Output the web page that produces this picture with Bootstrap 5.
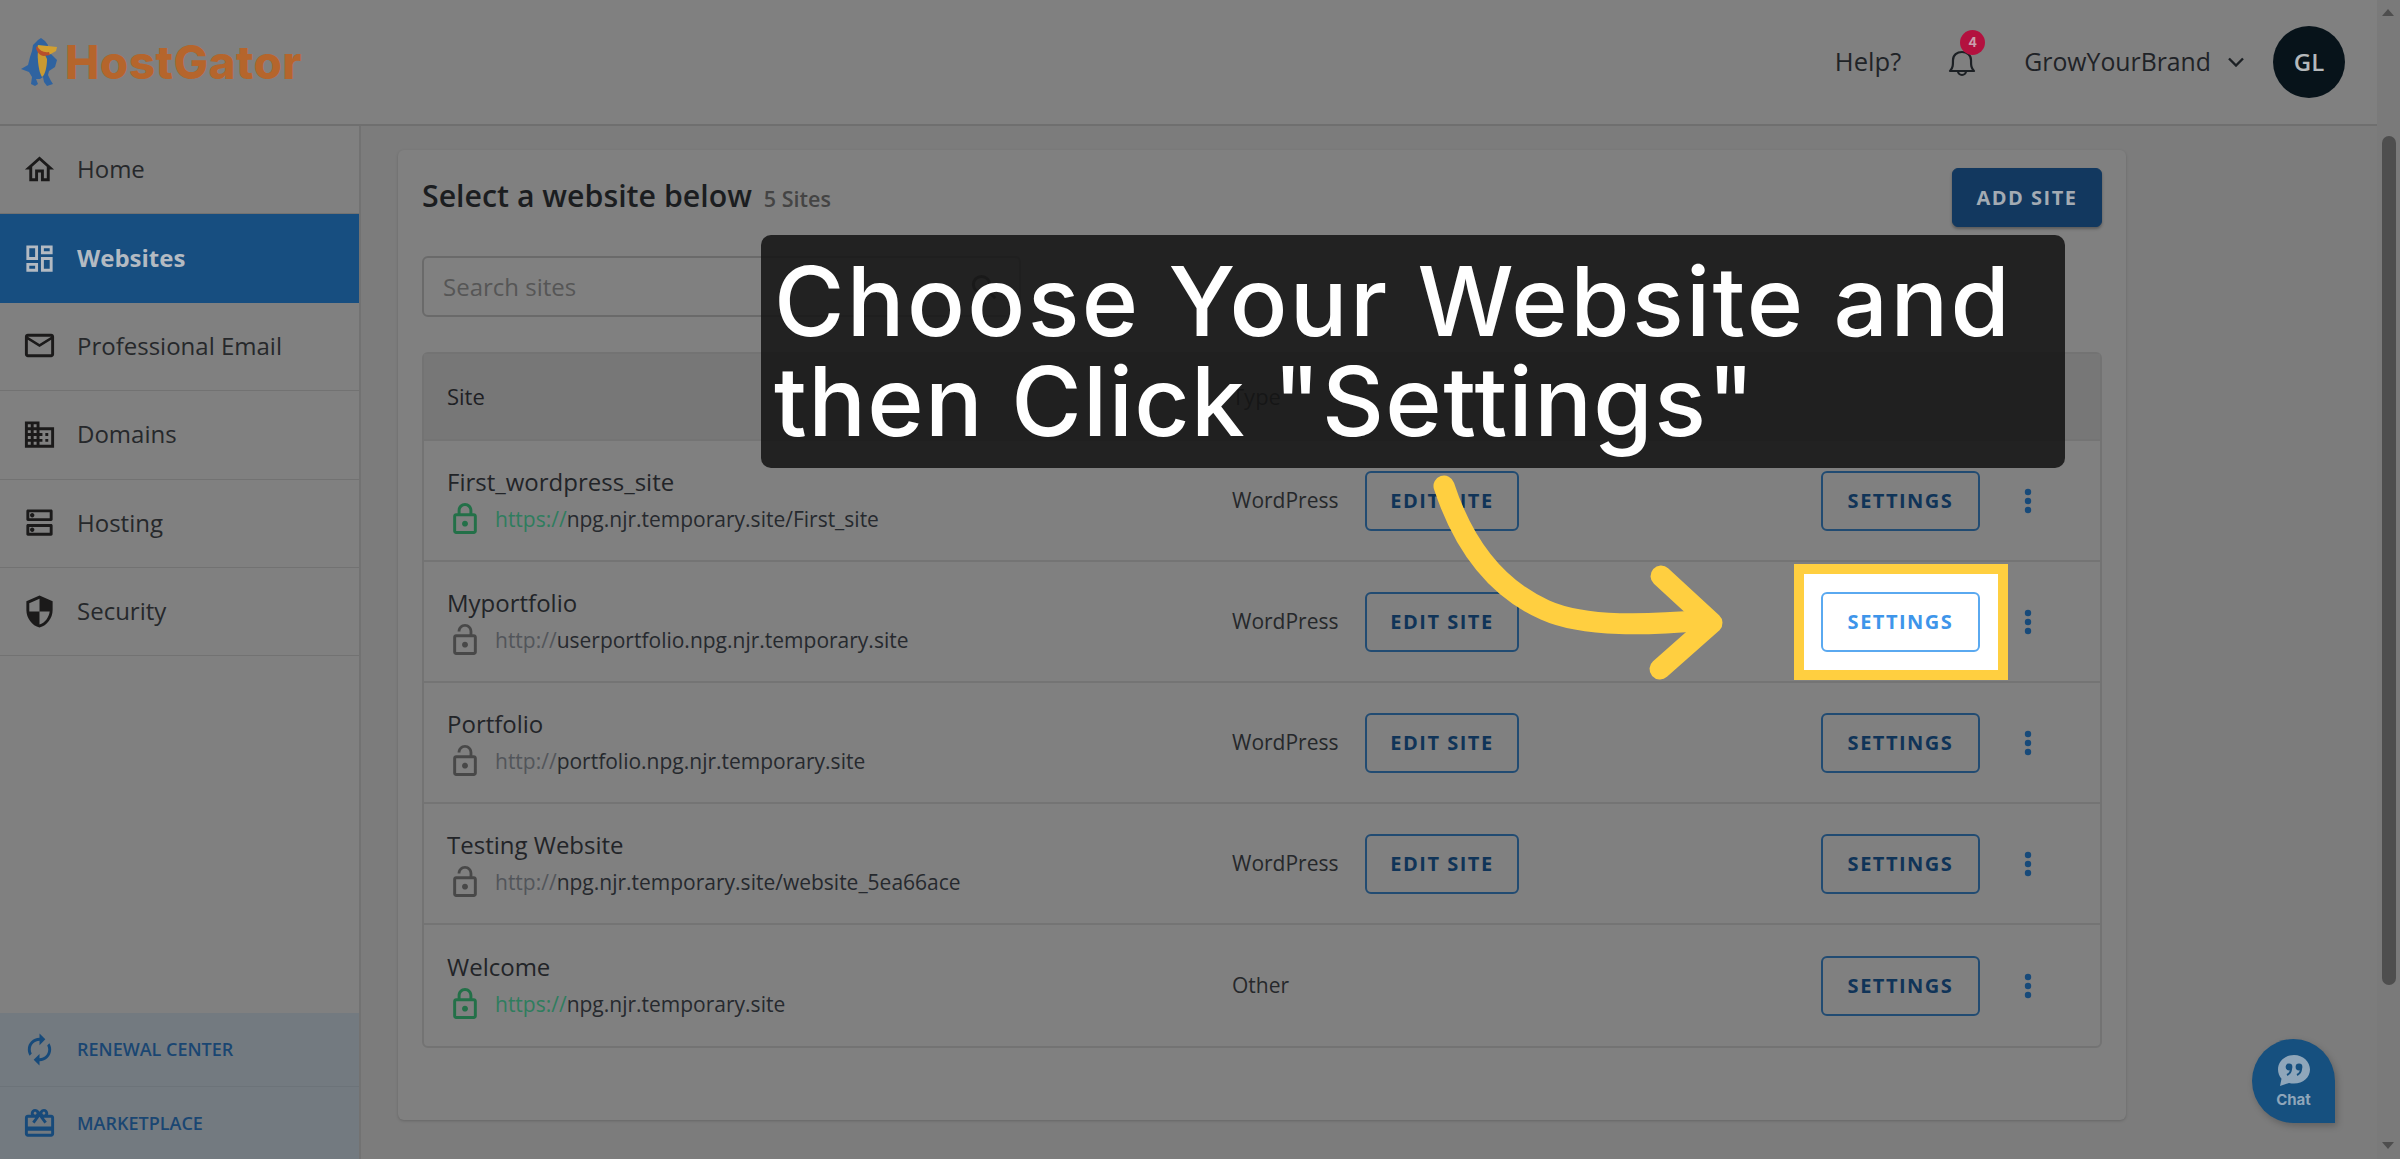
<!DOCTYPE html>
<html lang="en">
<head>
  <meta charset="UTF-8">
  <title>HostGator - Websites</title>
  <meta name="viewport" content="width=device-width, initial-scale=1">
  <link href="https://cdn.jsdelivr.net/npm/bootstrap@5.3.2/dist/css/bootstrap.min.css" rel="stylesheet">
  <style>
    html, body { height: 100%; }
    body { position: relative; overflow: hidden; background: #7c7c7c; font-family: "Open Sans", sans-serif; color: #262626; }

    .shell { width: 2377px; height: 1159px; }
    .top-bar { height: 126px; background: #808080; border-bottom: 2px solid #6f6f6f; padding-right: 32px; }
    .brand { margin-left: 21px; }
    .brand-word { font-family: Inter, sans-serif; font-weight: 800; font-size: 46px; letter-spacing: .4px; color: #b5652c; line-height: 1; margin-left: 8px; }
    .top-link { font-size: 25.6px; color: #1f2327; }
    .top-user { font-size: 24.8px; font-weight: 500; color: #1f2327; }
    .bell-wrap { position: relative; width: 32px; height: 32px; margin-left: 45px; margin-right: 46px; }
    .bell-count { position: absolute; top: -16px; left: 14px; width: 25px; height: 25px; border-radius: 50%; background: #b3113f; color: #c9a0ae; font: 700 13px/25px Inter, sans-serif; text-align: center; }
    .user-arrow { margin-left: 17px; margin-right: 29px; }
    .avatar { width: 72px; height: 72px; border-radius: 50%; background: #07131a; color: #b4b8bb; font-size: 24px; font-weight: 600; }

    .side { width: 361px; background: #808080; border-right: 2px solid #727272; }
    .side .list-group-item { height: 88.4px; background: transparent; color: #26282b; font-size: 24px; padding: 0 0 1px 22px; border-color: #727272; gap: 20px; }
    .side .list-group-item:last-child { border-bottom-width: 1px; }
    .side .list-group-item svg { width: 35px; height: 35px; fill: #1b1a1a; flex: none; }
    .side .list-group-item.active { background: #174e80; border-color: #174e80; color: #b3bac2; font-weight: 700; margin-top: 0; }
    .side .list-group-item.active svg { fill: #b3bac2; }
    .side-foot { background: #737a80; }
    .side-foot a { height: 73px; display: flex; align-items: center; gap: 20px; padding-left: 22px; font-size: 18px; font-weight: 600; color: #1a4672; text-decoration: none; }
    .side-foot a + a { border-top: 1px solid #6c7379; }
    .side-foot svg { width: 35px; height: 35px; fill: #174a7a; flex: none; }

    .main-area { padding: 24px 0 0 37px; }
    .panel { width: 1728px; height: 970px; background: #808080; border: 0; border-radius: 6px; box-shadow: 0 1px 3px rgba(0,0,0,.18); padding: 18px 24px 0 24px; }
    .panel-title { font-size: 30.3px; font-weight: 600; color: #1b1d20; line-height: 1; margin-top: 2px; }
    .panel-count { font-size: 21.5px; font-weight: 600; color: #444; margin-left: 12px; }
    .btn-add { width: 150px; height: 59px; background: #12385f; border-color: #12385f; color: #a3abb3; font-size: 20px; font-weight: 700; letter-spacing: 1.5px; padding: 0; box-shadow: 0 2px 3px rgba(0,0,0,.3); }

    .search-box { position: relative; width: 599px; margin-top: 29px; margin-bottom: 35px; }
    .search-box .form-control { height: 61px; background: #808080; border: 2px solid #6a6a6a; border-radius: 6px; font-size: 24px; padding-left: 19px; color: #555; }
    .search-box .form-control::placeholder { color: #565656; }
    .search-ic { position: absolute; right: 22px; top: 16px; width: 30px; height: 30px; }

    .site-table { width: 1680px; table-layout: fixed; margin: 0; border: 2px solid #737373; border-collapse: separate; border-spacing: 0; border-radius: 6px; --bs-table-bg: transparent; --bs-table-color: #262626; }
    .site-table th, .site-table td { padding: 0; border-bottom: 2px solid #747474; vertical-align: middle; }
    .site-table tr:last-child td { border-bottom: 0; }
    .site-table thead th { height: 87px; background: #777777; font-size: 22px; font-weight: 500; color: #1e2024; }
    .site-table td { height: 121.1px; font-size: 21px; color: #26282b; }
    .site-table .first-col { padding-left: 23px; }
    .site-name { font-size: 24px; line-height: 30px; color: #222428; }
    .site-url { font-size: 21px; line-height: 30px; gap: 18px; margin-top: 6px; margin-left: 6px; color: #26292e; }
    .site-url svg { width: 24px; height: 31px; flex: none; }
    .lock-on { fill: #237048; }
    .lock-off { fill: #484848; }
    .proto-on { color: #2f7d5e; }
    .proto-off { color: #52555a; }

    .btn-row { height: 60px; padding: 0; background: transparent; border: 2px solid #214b72; border-radius: 6px; color: #103458; font-size: 20px; font-weight: 700; letter-spacing: 1.5px; }
    .btn-edit { width: 154px; }
    .btn-set { width: 159px; }
    .kebab { width: 8px; height: 26px; display: block; margin-left: 9px; fill: #174a7a; }

    .hl-wrap { position: relative; display: inline-block; }
    .hl-wrap::before { content: ""; position: absolute; inset: -28px -28px -28px -27px; background: #fff; border: 10px solid #ffcf40; }
    .hl-wrap .btn-row { position: relative; background: #fff; border-color: #5aa9f0; color: #3e95ea; }

    .callout { position: absolute; left: 761px; top: 235px; width: 1304px; height: 233px; background: rgba(20,20,20,.88); border-radius: 10px; padding: 16px 0 0 13px; color: #fff; font-family: Inter, sans-serif; font-size: 96px; font-weight: 500; letter-spacing: 2.4px; line-height: 100px; white-space: nowrap; z-index: 30; }
    .callout-second { letter-spacing: 1.4px; }
    .arrow-mark { position: absolute; left: 1420px; top: 460px; width: 320px; height: 240px; z-index: 31; }

    .chat-bubble { position: absolute; left: 2252px; top: 1039px; width: 83px; height: 84px; background: #16507f; border-radius: 50% 50% 0 50%; box-shadow: 2px 3px 7px rgba(0,0,0,.22); color: #8fa6ba; font: 700 15px/1 Inter, sans-serif; padding-top: 15px; z-index: 5; }
    .chat-bubble svg { width: 34px; height: 33px; display: block; margin-bottom: 5px; }

    .scroll-rail { width: 23px; height: 1159px; background: #7a7a7a; position: relative; }
    .scroll-thumb { position: absolute; left: 5px; top: 136px; width: 14px; height: 849px; background: #4e4e4e; border-radius: 7px; }
    .scroll-up, .scroll-down { position: absolute; left: 5px; width: 0; height: 0; border-left: 6.5px solid transparent; border-right: 6.5px solid transparent; }
    .scroll-up { top: 9px; border-bottom: 7px solid #4e4e4e; }
    .scroll-down { top: 1142px; border-top: 7px solid #4e4e4e; }
  </style>
</head>
<body>

<svg width="0" height="0" class="position-absolute">
  <symbol id="lock-closed" viewBox="4 1 16 21"><path d="M18 8h-1V6c0-2.76-2.24-5-5-5S7 3.24 7 6v2H6c-1.1 0-2 .9-2 2v10c0 1.1.9 2 2 2h12c1.1 0 2-.9 2-2V10c0-1.1-.9-2-2-2zM9 6c0-1.66 1.34-3 3-3s3 1.34 3 3v2H9V6zm9 14H6V10h12v10zm-6-3c1.1 0 2-.9 2-2s-.9-2-2-2-2 .9-2 2 .9 2 2 2z"/></symbol>
  <symbol id="lock-open" viewBox="4 1 16 21"><path d="M12 17c1.1 0 2-.9 2-2s-.9-2-2-2-2 .9-2 2 .9 2 2 2zm6-9h-1V6c0-2.76-2.24-5-5-5S7 3.24 7 6h1.9c0-1.71 1.39-3.1 3.1-3.1 1.71 0 3.1 1.39 3.1 3.1v2H6c-1.1 0-2 .9-2 2v10c0 1.1.9 2 2 2h12c1.1 0 2-.9 2-2V10c0-1.1-.9-2-2-2zm0 12H6V10h12v10z"/></symbol>
  <symbol id="dots" viewBox="0 0 8 26"><circle cx="4" cy="4" r="3.2"/><circle cx="4" cy="13" r="3.2"/><circle cx="4" cy="22" r="3.2"/></symbol>
</svg>

<div class="d-flex">
  <div class="shell d-flex flex-column">

    <!-- Top bar -->
    <header class="top-bar d-flex align-items-center flex-shrink-0">
      <div class="brand d-flex align-items-center">
        <svg width="36" height="50" viewBox="0 0 36 50">
          <path d="M17 3L20 1L24 4L27 8L26 12L29 16L32 19L36 23L34 30L28 34L27 38L30 44L32 47L26 49L23 45L22 40L19 42L15 42L17 47L14 49L10 47L11 40L8 35L0 32L7 28L9 20L11 14L12 8Z" fill="#2f63a0"/>
          <path d="M17 14C16 22 18 36 21 40C24 38 26 30 26 22L24 18Z" fill="#c99a33"/>
          <path d="M17 8L36 10L35 14L28 18L22 18L16 12Z" fill="#d2a030"/>
          <path d="M16 9C19 14 23 16 28 15L29 18L23 19C19 19 16 15 15 11Z" fill="#b8502c"/>
        </svg>
        <span class="brand-word">HostGator</span>
      </div>
      <div class="d-flex align-items-center ms-auto">
        <span class="top-link">Help?</span>
        <div class="bell-wrap">
          <svg width="32" height="32" viewBox="0 0 32 32" fill="none" stroke="#1c2024" stroke-width="2.2" stroke-linejoin="round">
            <path d="M4 25c3-3 3-6 3-11 0-5 4-8 9-8s9 3 9 8c0 5 0 8 3 11z"/>
            <path d="M12 25a4 4 0 0 0 8 0"/>
          </svg>
          <span class="bell-count">4</span>
        </div>
        <span class="top-user">GrowYourBrand</span>
        <svg class="user-arrow" width="16" height="10" viewBox="0 0 16 10" fill="none" stroke="#1c2024" stroke-width="2.4"><path d="M1 1.500l7 7 7-7"/></svg>
        <span class="avatar d-flex align-items-center justify-content-center">GL</span>
      </div>
    </header>

    <div class="d-flex flex-grow-1">
      <!-- Sidebar -->
      <aside class="side d-flex flex-column flex-shrink-0">
        <div class="list-group list-group-flush">
          <a class="list-group-item d-flex align-items-center" href="#"><svg viewBox="0 0 24 24"><path d="M12 5.69l5 4.5V18h-2v-6H9v6H7v-7.81l5-4.5M12 3L2 12h3v8h6v-6h2v6h6v-8h3L12 3z"/></svg>Home</a>
          <a class="list-group-item d-flex align-items-center active" href="#"><svg viewBox="0 0 24 24"><path d="M19 5v2h-4V5h4M9 5v6H5V5h4m10 8v6h-4v-6h4M9 17v2H5v-2h4M21 3h-8v6h8V3zM11 3H3v10h8V3zm10 8h-8v10h8V11zm-10 4H3v6h8v-6z"/></svg>Websites</a>
          <a class="list-group-item d-flex align-items-center" href="#"><svg viewBox="0 0 24 24"><path d="M22 6c0-1.1-.9-2-2-2H4c-1.1 0-2 .9-2 2v12c0 1.1.9 2 2 2h16c1.1 0 2-.9 2-2V6zm-2 0l-8 5-8-5h16zm0 12H4V8l8 5 8-5v10z"/></svg>Professional Email</a>
          <a class="list-group-item d-flex align-items-center" href="#"><svg viewBox="0 0 24 24"><path d="M12 7V3H2v18h20V7H12zM6 19H4v-2h2v2zm0-4H4v-2h2v2zm0-4H4V9h2v2zm0-4H4V5h2v2zm4 12H8v-2h2v2zm0-4H8v-2h2v2zm0-4H8V9h2v2zm0-4H8V5h2v2zm10 12h-8v-2h2v-2h-2v-2h2v-2h-2V9h8v10zm-2-8h-2v2h2v-2zm0 4h-2v2h2v-2z"/></svg>Domains</a>
          <a class="list-group-item d-flex align-items-center" href="#"><svg viewBox="0 0 24 24"><path d="M19 15v4H5v-4h14m1-2H4c-.55 0-1 .45-1 1v6c0 .55.45 1 1 1h16c.55 0 1-.45 1-1v-6c0-.55-.45-1-1-1zM7 18.500c-.82 0-1.500-.67-1.500-1.500s.68-1.500 1.500-1.500 1.500.67 1.500 1.500-.67 1.500-1.500 1.500zM19 5v4H5V5h14m1-2H4c-.55 0-1 .45-1 1v6c0 .55.45 1 1 1h16c.55 0 1-.45 1-1V4c0-.55-.45-1-1-1zM7 8.500c-.82 0-1.500-.67-1.500-1.500S6.180 5.500 7 5.500s1.500.68 1.500 1.500S7.830 8.500 7 8.500z"/></svg>Hosting</a>
          <a class="list-group-item d-flex align-items-center" href="#"><svg viewBox="0 0 24 24"><path d="M12 1L3 5v6c0 5.55 3.84 10.74 9 12 5.16-1.26 9-6.45 9-12V5l-9-4zm0 10.99h7c-.53 4.12-3.28 7.79-7 8.94V12H5V6.3l7-3.11v8.8z"/></svg>Security</a>
        </div>
        <div class="side-foot mt-auto">
          <a href="#"><svg viewBox="0 0 24 24"><path d="M12 6v3l4-4-4-4v3c-4.42 0-8 3.58-8 8 0 1.57.46 3.03 1.24 4.26L6.7 14.8c-.45-.83-.7-1.79-.7-2.8 0-3.31 2.69-6 6-6zm6.76 1.74L17.3 9.2c.44.84.7 1.79.7 2.8 0 3.31-2.69 6-6 6v-3l-4 4 4 4v-3c4.42 0 8-3.58 8-8 0-1.57-.46-3.03-1.24-4.26z"/></svg>RENEWAL CENTER</a>
          <a href="#"><svg viewBox="0 0 24 24"><path d="M20 6h-2.18c.11-.31.18-.65.18-1 0-1.66-1.34-3-3-3-1.05 0-1.96.54-2.5 1.35l-.5.67-.5-.68C10.96 2.54 10.05 2 9 2 7.34 2 6 3.34 6 5c0 .35.07.69.18 1H4c-1.11 0-1.99.89-1.99 2L2 19c0 1.11.89 2 2 2h16c1.11 0 2-.89 2-2V8c0-1.11-.89-2-2-2zm-5-2c.55 0 1 .45 1 1s-.45 1-1 1-1-.45-1-1 .45-1 1-1zM9 4c.55 0 1 .45 1 1s-.45 1-1 1-1-.45-1-1 .45-1 1-1zm11 15H4v-2h16v2zm0-5H4V8h5.08L7 10.83 8.62 12 11 8.76l1-1.36 1 1.36L15.38 12 17 10.83 14.92 8H20v6z"/></svg>MARKETPLACE</a>
        </div>
      </aside>

      <!-- Main content -->
      <main class="main-area flex-grow-1">
        <div class="card panel">
          <div class="d-flex justify-content-between align-items-center">
            <div class="d-flex align-items-baseline">
              <span class="panel-title">Select a website below</span>
              <span class="panel-count">5 Sites</span>
            </div>
            <button class="btn btn-primary btn-add">ADD SITE</button>
          </div>

          <div class="search-box">
            <input class="form-control" type="text" placeholder="Search sites">
            <svg class="search-ic" viewBox="0 0 24 24" fill="none" stroke="#3a3a3a" stroke-width="2.4"><circle cx="10" cy="10" r="6.5"/><path d="M15 15l6 6"/></svg>
          </div>

          <table class="table site-table">
            <colgroup>
              <col style="width: 808px"><col style="width: 133px"><col style="width: 456px"><col style="width: 194px"><col>
            </colgroup>
            <thead>
              <tr><th class="first-col">Site</th><th>Type</th><th></th><th></th><th></th></tr>
            </thead>
            <tbody>
              <tr>
                <td class="first-col">
                  <div class="site-name">First_wordpress_site</div>
                  <div class="site-url d-flex align-items-center"><svg class="lock-on"><use href="#lock-closed"/></svg><span><span class="proto-on">https://</span>npg.njr.temporary.site/First_site</span></div>
                </td>
                <td>WordPress</td>
                <td><button class="btn btn-row btn-edit">EDIT SITE</button></td>
                <td><button class="btn btn-row btn-set">SETTINGS</button></td>
                <td><svg class="kebab"><use href="#dots"/></svg></td>
              </tr>
              <tr>
                <td class="first-col">
                  <div class="site-name">Myportfolio</div>
                  <div class="site-url d-flex align-items-center"><svg class="lock-off"><use href="#lock-open"/></svg><span><span class="proto-off">http://</span>userportfolio.npg.njr.temporary.site</span></div>
                </td>
                <td>WordPress</td>
                <td><button class="btn btn-row btn-edit">EDIT SITE</button></td>
                <td><span class="hl-wrap"><button class="btn btn-row btn-set">SETTINGS</button></span></td>
                <td><svg class="kebab"><use href="#dots"/></svg></td>
              </tr>
              <tr>
                <td class="first-col">
                  <div class="site-name">Portfolio</div>
                  <div class="site-url d-flex align-items-center"><svg class="lock-off"><use href="#lock-open"/></svg><span><span class="proto-off">http://</span>portfolio.npg.njr.temporary.site</span></div>
                </td>
                <td>WordPress</td>
                <td><button class="btn btn-row btn-edit">EDIT SITE</button></td>
                <td><button class="btn btn-row btn-set">SETTINGS</button></td>
                <td><svg class="kebab"><use href="#dots"/></svg></td>
              </tr>
              <tr>
                <td class="first-col">
                  <div class="site-name">Testing Website</div>
                  <div class="site-url d-flex align-items-center"><svg class="lock-off"><use href="#lock-open"/></svg><span><span class="proto-off">http://</span>npg.njr.temporary.site/website_5ea66ace</span></div>
                </td>
                <td>WordPress</td>
                <td><button class="btn btn-row btn-edit">EDIT SITE</button></td>
                <td><button class="btn btn-row btn-set">SETTINGS</button></td>
                <td><svg class="kebab"><use href="#dots"/></svg></td>
              </tr>
              <tr>
                <td class="first-col">
                  <div class="site-name">Welcome</div>
                  <div class="site-url d-flex align-items-center"><svg class="lock-on"><use href="#lock-closed"/></svg><span><span class="proto-on">https://</span>npg.njr.temporary.site</span></div>
                </td>
                <td>Other</td>
                <td></td>
                <td><button class="btn btn-row btn-set">SETTINGS</button></td>
                <td><svg class="kebab"><use href="#dots"/></svg></td>
              </tr>
            </tbody>
          </table>
        </div>
      </main>
    </div>
  </div>

  <!-- Browser scrollbar -->
  <div class="scroll-rail flex-shrink-0">
    <div class="scroll-up"></div>
    <div class="scroll-thumb"></div>
    <div class="scroll-down"></div>
  </div>
</div>

<!-- Chat launcher -->
<div class="chat-bubble d-flex flex-column align-items-center">
  <svg viewBox="0 0 34 33">
    <path d="M17 1C8 1 1 7.500 1 15.500c0 3.500 1.300 6.700 3.500 9.200L3 32l9-3c1.600.4 3.300.6 5 .6 9 0 16-6.300 16-14.100S26 1 17 1z" fill="#8fa6ba"/>
    <circle cx="12" cy="13" r="3.400" fill="#16507f"/><circle cx="22" cy="13" r="3.400" fill="#16507f"/>
    <path d="M14 15c0 3-2 5-4 6M24 15c0 3-2 5-4 6" stroke="#16507f" stroke-width="2" fill="none"/>
  </svg>
  Chat
</div>

<!-- Tutorial callout and arrow -->
<div class="callout">Choose Your Website and<br><span class="callout-second">then Click "Settings"</span></div>
<svg class="arrow-mark" viewBox="0 0 320 240" fill="none" stroke="#ffcf40" stroke-width="21" stroke-linecap="round" stroke-linejoin="round">
  <path d="M24 26C45 90 80 130 125 150C165 168 230 165 285 160"/>
  <path d="M241 116L292 163L240 209"/>
</svg>

<script src="https://cdn.jsdelivr.net/npm/bootstrap@5.3.2/dist/js/bootstrap.bundle.min.js"></script>
</body>
</html>
